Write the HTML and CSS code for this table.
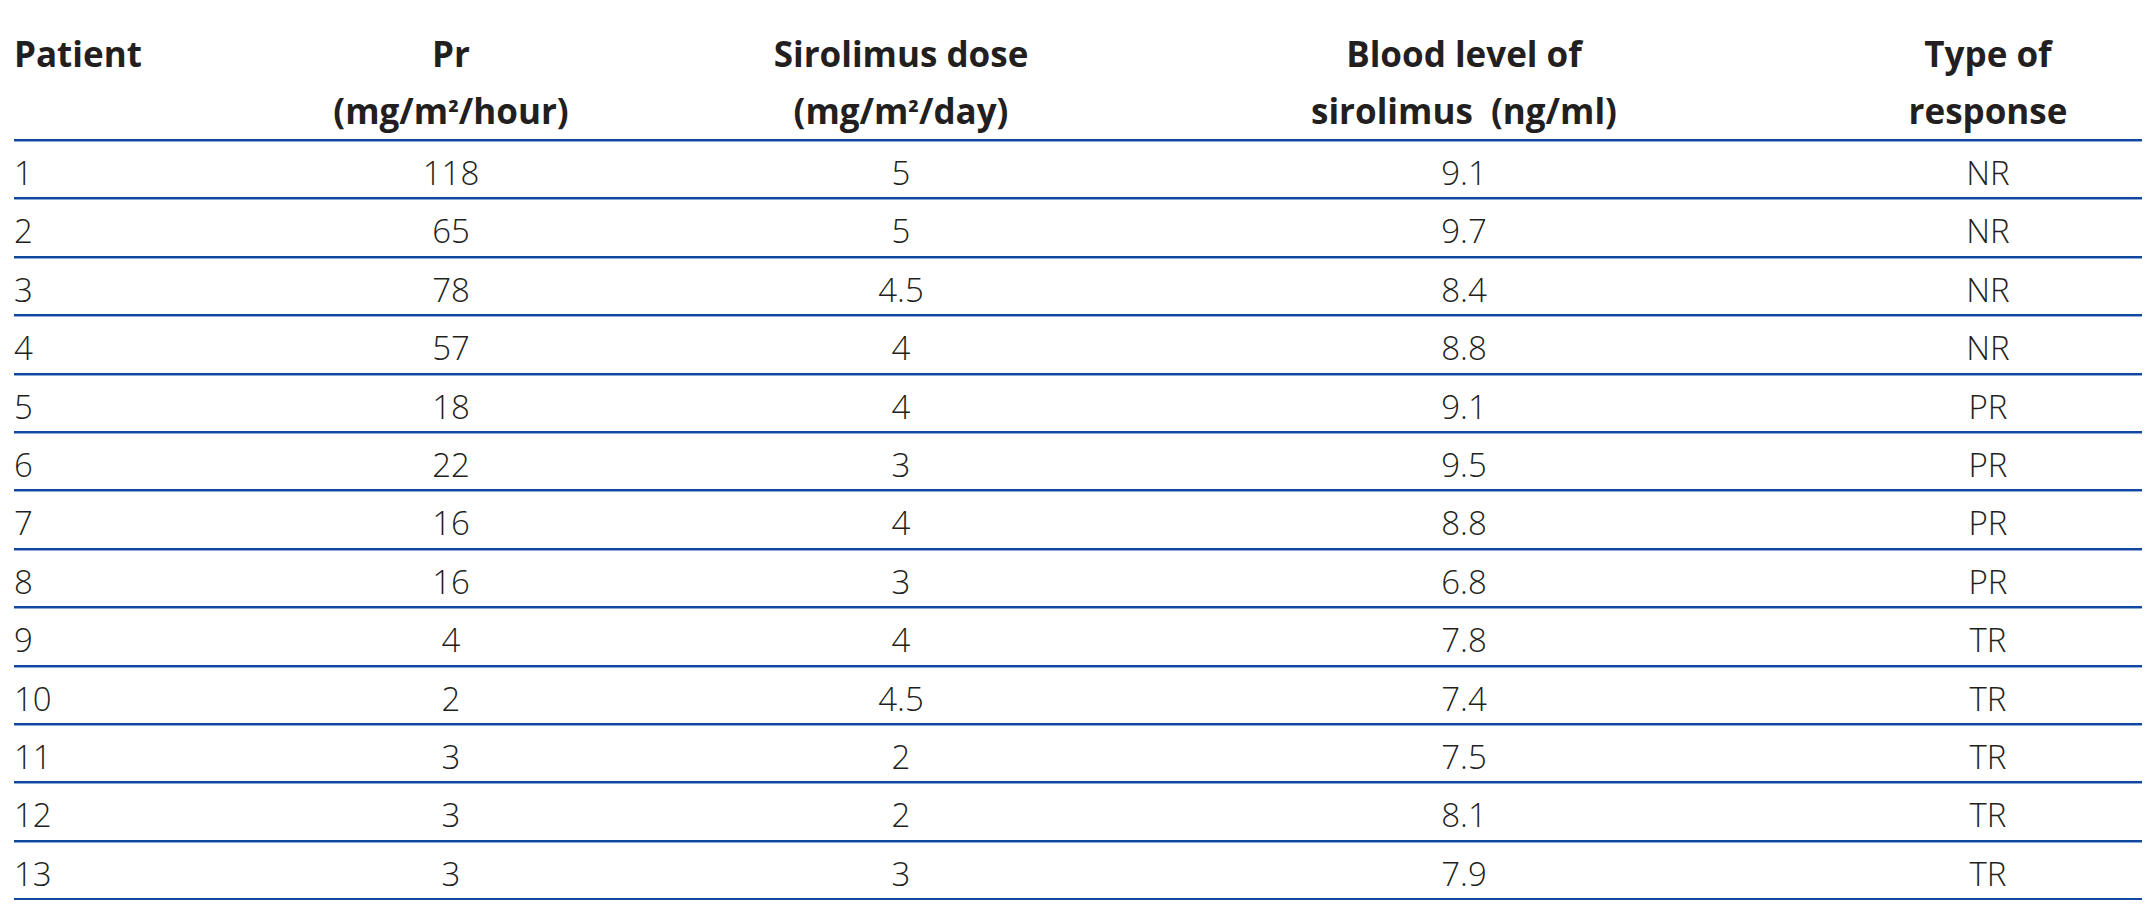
FILE: index.html
```html
<!DOCTYPE html>
<html lang="en">
<head>
<meta charset="utf-8">
<title>Sirolimus response table</title>
<link rel="stylesheet" href="styles.css">
</head>
<body>
<div class="table">
  <div class="row head">
    <div class="cell first">Patient</div>
    <div class="cell">Pr<br>(mg/m<span class="sq">²</span>/hour)</div>
    <div class="cell">Sirolimus dose<br>(mg/m<span class="sq">²</span>/day)</div>
    <div class="cell">Blood level of<br>sirolimus&nbsp; (ng/ml)</div>
    <div class="cell last">Type of<br>response</div>
  </div>
  <div class="row"><div class="cell first">1</div><div class="cell">118</div><div class="cell">5</div><div class="cell">9.1</div><div class="cell last">NR</div></div>
  <div class="row"><div class="cell first">2</div><div class="cell">65</div><div class="cell">5</div><div class="cell">9.7</div><div class="cell last">NR</div></div>
  <div class="row"><div class="cell first">3</div><div class="cell">78</div><div class="cell">4.5</div><div class="cell">8.4</div><div class="cell last">NR</div></div>
  <div class="row"><div class="cell first">4</div><div class="cell">57</div><div class="cell">4</div><div class="cell">8.8</div><div class="cell last">NR</div></div>
  <div class="row"><div class="cell first">5</div><div class="cell">18</div><div class="cell">4</div><div class="cell">9.1</div><div class="cell last">PR</div></div>
  <div class="row"><div class="cell first">6</div><div class="cell">22</div><div class="cell">3</div><div class="cell">9.5</div><div class="cell last">PR</div></div>
  <div class="row"><div class="cell first">7</div><div class="cell">16</div><div class="cell">4</div><div class="cell">8.8</div><div class="cell last">PR</div></div>
  <div class="row"><div class="cell first">8</div><div class="cell">16</div><div class="cell">3</div><div class="cell">6.8</div><div class="cell last">PR</div></div>
  <div class="row"><div class="cell first">9</div><div class="cell">4</div><div class="cell">4</div><div class="cell">7.8</div><div class="cell last">TR</div></div>
  <div class="row"><div class="cell first">10</div><div class="cell">2</div><div class="cell">4.5</div><div class="cell">7.4</div><div class="cell last">TR</div></div>
  <div class="row"><div class="cell first">11</div><div class="cell">3</div><div class="cell">2</div><div class="cell">7.5</div><div class="cell last">TR</div></div>
  <div class="row"><div class="cell first">12</div><div class="cell">3</div><div class="cell">2</div><div class="cell">8.1</div><div class="cell last">TR</div></div>
  <div class="row"><div class="cell first">13</div><div class="cell">3</div><div class="cell">3</div><div class="cell">7.9</div><div class="cell last">TR</div></div>
</div>
</body>
</html>
```

FILE: styles.css
```css
html, body {
  margin: 0;
  padding: 0;
  background: #ffffff;
}

body {
  color: #231f20;
  font-family: "Open Sans", "Liberation Sans", sans-serif;
}

.table {
  margin-left: 14px;
  width: 2128px;
}

.row {
  display: grid;
  grid-template-columns: 216px 442px 458px 668px 344px;
  box-sizing: border-box;
  height: 58.4px;
  padding-top: 12px;
  border-bottom: 2px solid #0f47a1;
  box-shadow: 0 1px 0 #8ca9d9;
  font-size: 33px;
  font-weight: 300;
  line-height: 40px;
}

.row.head {
  height: 141px;
  padding-top: 25px;
  font-size: 35px;
  font-weight: 700;
  line-height: 57px;
}

.cell {
  text-align: center;
  white-space: nowrap;
}

.cell.first {
  text-align: left;
  padding-left: 0;
}

.cell.last {
  padding-left: 36px;
}

.sq {
  font-size: 0.8em;
}
```
